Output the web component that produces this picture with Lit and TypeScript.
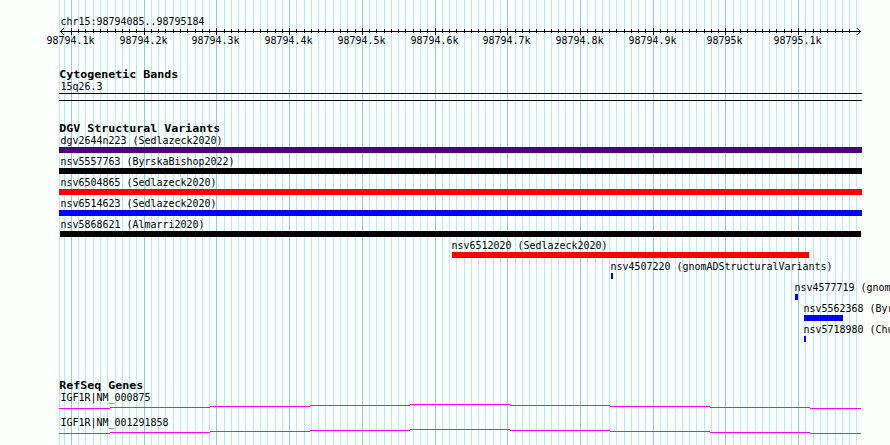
import { LitElement, html, svg, css } from "lit";
import { customElement } from "lit/decorators.js";

type Label = [x: number, baseline: number, text: string];
type Bar = [x: number, y: number, width: number, color: string];

const STEP = 800 / 110;
const LEFT = 59;
const RIGHT = 862;

const gridX = (k: number) => Math.floor(71.4 + k * STEP);
const grid = Array.from({ length: 110 }, (_, i) => i - 1).map((k) => ({
  x: gridX(k),
  major: k % 10 === 0,
}));

const headings: Label[] = [
  [59, 78, "Cytogenetic Bands"],
  [59, 132, "DGV Structural Variants"],
  [59, 389, "RefSeq Genes"],
];

const labels: Label[] = [
  [60, 25, "chr15:98794085..98795184"],
  [46, 44, "98794.1k"],
  [119, 44, "98794.2k"],
  [191, 44, "98794.3k"],
  [264, 44, "98794.4k"],
  [337, 44, "98794.5k"],
  [410, 44, "98794.6k"],
  [482, 44, "98794.7k"],
  [555, 44, "98794.8k"],
  [628, 44, "98794.9k"],
  [706, 44, "98795k"],
  [773, 44, "98795.1k"],
  [60, 90, "15q26.3"],
  [60, 144, "dgv2644n223 (Sedlazeck2020)"],
  [60, 165, "nsv5557763 (ByrskaBishop2022)"],
  [60, 186, "nsv6504865 (Sedlazeck2020)"],
  [60, 207, "nsv6514623 (Sedlazeck2020)"],
  [60, 228, "nsv5868621 (Almarri2020)"],
  [451, 249, "nsv6512020 (Sedlazeck2020)"],
  [610, 270, "nsv4507220 (gnomADStructuralVariants)"],
  [794, 291, "nsv4577719 (gnomADStructuralVariants)"],
  [803, 312, "nsv5562368 (ByrskaBishop2022)"],
  [803, 333, "nsv5718980 (Chuang2021)"],
  [60, 401, "IGF1R|NM_000875"],
  [60, 426, "IGF1R|NM_001291858"],
];

const bars: Bar[] = [
  [59, 147, 803, "#4b0082"],
  [59, 168, 803, "#000"],
  [59, 189, 803, "#f00"],
  [59, 210, 803, "#00f"],
  [60, 231, 801, "#000"],
  [452, 252, 357, "#f00"],
  [611, 273, 2, "#00f"],
  [795, 294, 3, "#00f"],
  [804, 315, 39, "#00f"],
  [804, 336, 2, "#00f"],
];

/* Stepped intron line: start, end, rise above the outermost level */
const steps = [
  [59, 110, 0],
  [110, 210, 1],
  [210, 310, 2],
  [310, 410, 3],
  [410, 510, 4],
  [510, 610, 3],
  [610, 710, 2],
  [710, 810, 1],
  [810, 861, 0],
];

@customElement("app-root")
export class AppRoot extends LitElement {
  static styles = css`
    :host {
      display: block;
      width: 890px;
      height: 445px;
      overflow: hidden;
      background: #fdfffc;
    }
    svg {
      display: block;
    }
    .crisp {
      shape-rendering: crispEdges;
    }
    .minor {
      fill: #afeeee;
    }
    .major {
      fill: #87ceeb;
    }
    .gene {
      fill: #f0f;
    }
    .arrow {
      fill: none;
      stroke: #000;
      stroke-width: 1;
    }
    text {
      font-family: "DejaVu Sans Mono", "Liberation Mono", monospace;
      font-size: 11px;
      white-space: pre;
    }
    .heading {
      font-size: 11px;
      font-weight: bold;
    }
  `;

  private text([x, y, value]: Label, advance: number, cls: string, shift = 0) {
    return svg`<text class=${cls} x=${x + shift} y=${y} textLength=${value.length * advance}
      lengthAdjust="spacingAndGlyphs">${value}</text>`;
  }

  render() {
    return html`
      <svg width="890" height="445" viewBox="0 0 890 445">
        <g class="crisp">
          <rect class="minor" x=${LEFT} y="0" width="1" height="445"></rect>
          ${grid.map(
            (g) => svg`<rect class=${g.major ? "major" : "minor"} x=${g.x} y="0" width="1" height="445"></rect>`,
          )}
          <rect x="60" y="31" width="801" height="1"></rect>
          ${grid
            .filter((g) => g.x > 70 && g.x < 856)
            .map((g) =>
              g.major
                ? svg`<rect x=${g.x} y="28" width="1" height="7"></rect>`
                : svg`<rect x=${g.x} y="29" width="1" height="4"></rect>`,
            )}
          <rect x=${LEFT} y="93" width=${RIGHT - LEFT} height="1"></rect>
          <rect x=${LEFT} y="100" width=${RIGHT - LEFT} height="1"></rect>
          ${bars.map(([x, y, w, c]) => svg`<rect x=${x} y=${y} width=${w} height="6" fill=${c}></rect>`)}
          ${[408, 433].map((base) =>
            steps.map(
              ([a, b, up]) => svg`<rect class="gene" x=${a} y=${base - up} width=${b - a} height="1"></rect>`,
            ),
          )}
        </g>
        <path class="arrow" d="M64 28L60.5 31.5L64 35M857 28L860.5 31.5L857 35"></path>
        ${headings.map((l) => this.text(l, 7, "heading", 0.3))}
        ${labels.map((l) => this.text(l, 6, "label", 0.6))}
      </svg>
    `;
  }
}
